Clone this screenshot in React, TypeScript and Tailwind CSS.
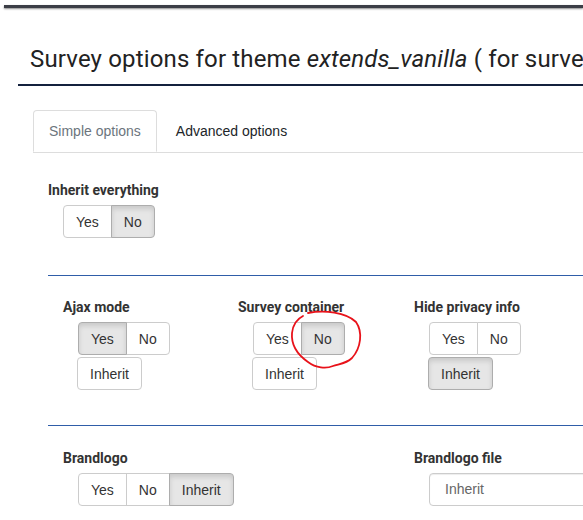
import React from "react"

type Opt = { label: string; active?: boolean }

const btnBase =
  "h-[33px] px-3 border text-[14px] leading-none text-[#333] font-['Liberation_Sans',Arial,sans-serif]"

function ToggleGroup({ options, inherit }: { options: Opt[]; inherit?: Opt }) {
  return (
    <div className="flex flex-col items-start">
      <div className="flex">
        {options.map((o, i) => (
          <button
            key={o.label}
            className={`${btnBase} ${i === 0 ? "rounded-l" : "-ml-px"} ${
              i === options.length - 1 ? "rounded-r" : ""
            } ${
              o.active
                ? "bg-[#e6e6e6] border-[#adadad] shadow-[inset_0_3px_5px_rgba(0,0,0,0.125)] relative z-10"
                : "bg-white border-[#ccc]"
            }`}
          >
            {o.label}
          </button>
        ))}
      </div>
      {inherit ? (
        <button
          className={`${btnBase} mt-[2px] -ml-px rounded ${
            inherit.active
              ? "bg-[#e6e6e6] border-[#adadad] shadow-[inset_0_3px_5px_rgba(0,0,0,0.125)]"
              : "bg-white border-[#ccc]"
          }`}
        >
          {inherit.label}
        </button>
      ) : null}
    </div>
  )
}

function Field({ label, children }: { label: string; children: React.ReactNode }) {
  return (
    <div className="px-[15px]">
      <label className="block whitespace-nowrap text-[14px] font-bold text-[#333] leading-[18px] mb-[6px]">
        {label}
      </label>
      <div className="pl-[15px]">{children}</div>
    </div>
  )
}

export default function App() {
  return (
    <div className="relative w-[583px] h-[520px] overflow-hidden bg-white font-['Roboto',sans-serif]">
      <div className="pt-[5px] pl-[4px]">
        <div className="h-[3px] bg-[#3b3e46] shadow-[0_1px_2px_rgba(0,0,0,0.45)]" />
      </div>

      <div className="ml-[18px] mt-[37px] border-b-2 border-[#14213d] pl-[12px] pb-[10px] overflow-hidden">
        <h1 className="whitespace-nowrap text-[24px] leading-[29px] tracking-[0.15px] text-[#222]">
          Survey options for theme <em>extends_vanilla</em> ( for surve
        </h1>
      </div>

      <div className="pl-[33px] pt-[24px]">
        <div className="flex border-b border-[#ddd] font-['Liberation_Sans',Arial,sans-serif] text-[14px]">
          <div className="h-[42px] px-[15px] flex items-center border border-[#ddd] border-b-white rounded-t -mb-px bg-white text-[#6c757d]">
            Simple options
          </div>
          <div className="h-[42px] px-[19px] flex items-center text-[#212529]">Advanced options</div>
        </div>

        <div className="pt-[28px] pl-[15px]">
          <label className="block text-[14px] font-bold text-[#333] leading-[18px] mb-[6px]">
            Inherit everything
          </label>
          <div className="pl-[15px]">
            <ToggleGroup options={[{ label: "Yes" }, { label: "No", active: true }]} />
          </div>

          <div className="mt-[37px] h-px bg-[#2f5da8]" />

          <div className="grid grid-cols-[175px_176px_1fr] pt-[22px]">
            <Field label="Ajax mode">
              <ToggleGroup
                options={[{ label: "Yes", active: true }, { label: "No" }]}
                inherit={{ label: "Inherit" }}
              />
            </Field>
            <Field label="Survey container">
              <ToggleGroup
                options={[{ label: "Yes" }, { label: "No", active: true }]}
                inherit={{ label: "Inherit" }}
              />
            </Field>
            <Field label="Hide privacy info">
              <ToggleGroup
                options={[{ label: "Yes" }, { label: "No" }]}
                inherit={{ label: "Inherit", active: true }}
              />
            </Field>
          </div>

          <div className="mt-[35px] h-px bg-[#2f5da8]" />

          <div className="grid grid-cols-[351px_1fr] pt-[23px]">
            <Field label="Brandlogo">
              <ToggleGroup
                options={[{ label: "Yes" }, { label: "No" }, { label: "Inherit", active: true }]}
              />
            </Field>
            <Field label="Brandlogo file">
              <div className="h-[33px] w-[200px] border border-[#ccc] rounded flex items-center pl-[15px] text-[14px] text-[#666] font-['Liberation_Sans',Arial,sans-serif] shadow-[inset_0_1px_1px_rgba(0,0,0,0.075)]">
                Inherit
              </div>
            </Field>
          </div>
        </div>
      </div>

      {/* hand-drawn annotation */}
      <svg
        className="absolute inset-0 pointer-events-none"
        width="583"
        height="520"
        viewBox="0 0 583 520"
      >
        <path
          d="M308 313 C324 310 346 312 356 322 C363 332 361 348 352 358 C346 364 338 364 333 366 C326 369 316 368 308 362 C298 355 291 345 292 333 C293 324 297 319 303 316"
          fill="none"
          stroke="#e8121a"
          strokeWidth="1.8"
          strokeLinecap="round"
        />
      </svg>
    </div>
  )
}
